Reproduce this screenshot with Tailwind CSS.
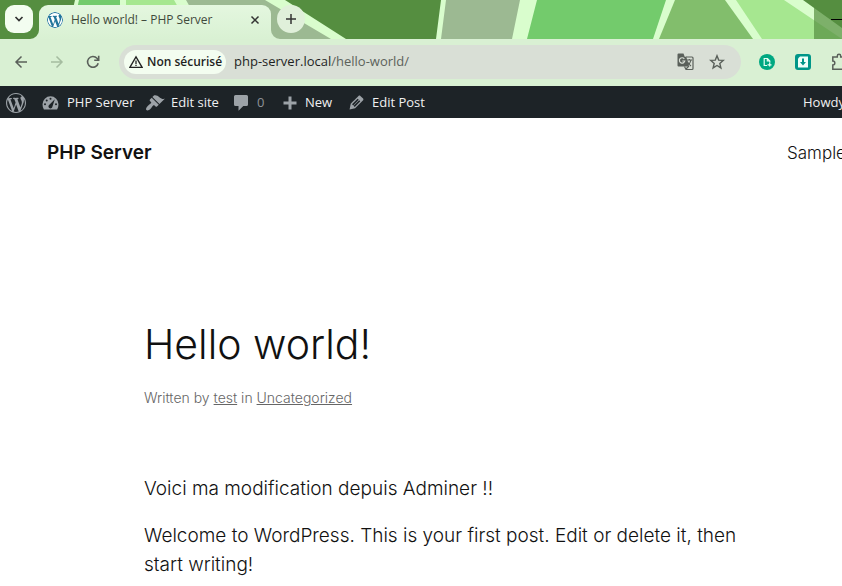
<!DOCTYPE html>
<html lang="en">
<head>
  <meta charset="UTF-8" />
  <meta name="viewport" content="width=device-width, initial-scale=1.0" />
  <title>Hello world! – PHP Server</title>
  <script src="https://cdn.jsdelivr.net/npm/@tailwindcss/browser@4"></script>
</head>
<body class="bg-white min-h-screen overflow-x-hidden font-['Inter',sans-serif] text-[#111]">

  <!-- shared logo -->
  <svg class="hidden">
    <symbol id="wp" viewBox="0 0 20 20">
      <path fill="currentColor" d="M20 10c0-5.51-4.49-10-10-10C4.48 0 0 4.49 0 10c0 5.52 4.48 10 10 10 5.51 0 10-4.48 10-10zM7.78 15.37L4.37 6.22c.55-.02 1.17-.08 1.17-.08.5-.06.44-1.13-.06-1.11 0 0-1.45.11-2.37.11-.18 0-.37 0-.58-.01C4.12 2.69 6.87 1.11 10 1.11c2.33 0 4.45.87 6.05 2.34-.68-.11-1.65.39-1.65 1.58 0 .74.45 1.36.9 2.1.35.61.55 1.36.55 2.46 0 1.49-1.4 5-1.4 5l-3.03-8.37c.54-.02.82-.17.82-.17.5-.05.44-1.25-.06-1.22 0 0-1.44.12-2.38.12-.87 0-2.33-.12-2.33-.12-.5-.03-.56 1.2-.06 1.22l.92.08 1.26 3.41zM17.41 10c.24-.64.74-1.87.43-4.25.7 1.29 1.05 2.71 1.05 4.25 0 3.29-1.73 6.24-4.4 7.78.97-2.59 1.94-5.2 2.92-7.78zM6.1 18.09C3.12 16.65 1.11 13.53 1.11 10c0-1.3.23-2.48.72-3.59C3.25 10.3 4.67 14.2 6.1 18.09zm4.03-6.63l2.58 6.98c-.86.29-1.76.45-2.71.45-.79 0-1.57-.11-2.29-.33.81-2.38 1.62-4.74 2.42-7.1z"/>
    </symbol>
  </svg>

  <!-- tab strip -->
  <div class="relative h-[39px] overflow-hidden bg-[#d9fdcd] font-['Open_Sans',sans-serif]">
    <svg class="absolute inset-0 h-full w-full" viewBox="0 0 842 39" preserveAspectRatio="xMinYMin slice">
      <path fill="#558e40" d="M0 0h75l-9 39H0zM285 0h156l-5 39h-90zM803 0h39v28z"/>
      <path fill="#73cb6c" d="M79 0h41v39H70zM537 0h129l-13 39H527z"/>
      <path fill="#a6e790" d="M126 0h48l22 39h-70zM736 0h48l58 39h-80z"/>
      <path fill="#82be6c" d="M675 0h50l28 39h-94z"/>
      <path fill="#9cb992" d="M186 0h79l66 39H208zM446 0h74l-8 39h-71z"/>
    </svg>
    <div class="absolute right-0 top-0 h-full w-7 bg-[#558e40]/70"></div>
    <div class="absolute right-0 top-[19px] h-px w-[11px] bg-black"></div>
    <div class="relative flex h-full items-end gap-[6px] pl-[5px]">
      <button aria-label="Search tabs" class="mb-[6px] grid h-7 w-7 place-items-center rounded-[9px] bg-[#f3fdf0]">
        <svg width="10" height="10" viewBox="0 0 10 10" fill="none" stroke="#333" stroke-width="1.7"><path d="M1.5 3 5 6.5 8.5 3"/></svg>
      </button>
      <div class="relative flex h-[34px] w-[232px] items-center rounded-t-[9px] bg-linear-to-b from-[#e4f7df] to-[#d9f1d3] pb-[5px] pl-2 pr-[11px]">
        <svg class="absolute -left-[9px] bottom-0" width="9" height="9" viewBox="0 0 9 9"><path fill="#d9f1d3" d="M9 0v9H0a9 9 0 0 0 9-9z"/></svg>
        <svg class="absolute -right-[9px] bottom-0" width="9" height="9" viewBox="0 0 9 9"><path fill="#d9f1d3" d="M0 0v9h9a9 9 0 0 1-9-9z"/></svg>
        <svg class="h-4 w-4 rounded-full bg-white text-[#21759b]"><use href="#wp"/></svg>
        <span class="ml-2 flex-1 whitespace-nowrap text-[12px] text-[#3f4a3c]">Hello world! – PHP Server</span>
        <button aria-label="Close tab"><svg width="10" height="10" viewBox="0 0 10 10" stroke="#333" stroke-width="1.5"><path d="m1.5 1.5 7 7m0-7-7 7"/></svg></button>
      </div>
      <button aria-label="New tab" class="mb-[6px] grid h-7 w-7 place-items-center rounded-full bg-[#e0f0da]">
        <svg width="12" height="12" viewBox="0 0 12 12" stroke="#333" stroke-width="1.5"><path d="M6 1v10M1 6h10"/></svg>
      </button>
    </div>
  </div>

  <!-- address bar -->
  <div class="flex h-[47px] items-center overflow-hidden bg-[#d9f0d3] pb-[2px] font-['Open_Sans',sans-serif]">
    <div class="ml-[14px] flex shrink-0 gap-[22px]">
      <button aria-label="Back"><svg width="14" height="14" viewBox="0 0 14 14" fill="none" stroke="#5a605a" stroke-width="1.5"><path d="M13 7H2m5.5-5.5L2 7l5.5 5.5"/></svg></button>
      <button aria-label="Forward" disabled><svg width="14" height="14" viewBox="0 0 14 14" fill="none" stroke="#a5bca0" stroke-width="1.5"><path d="M1 7h11M6.5 1.5 12 7l-5.5 5.5"/></svg></button>
      <button aria-label="Reload"><svg width="14" height="14" viewBox="0 0 14 14" fill="none" stroke="#5a605a" stroke-width="1.6"><path d="M12.2 8.2A5.4 5.4 0 1 1 11 3.3l1.5 1.5M12.7.8v4.500H8.200"/></svg></button>
    </div>
    <div class="ml-[19px] flex h-[34px] flex-1 items-center rounded-full bg-[#d9dfd6] pl-[5px] pr-4">
      <button class="flex h-6 w-[102px] shrink-0 items-center gap-1 whitespace-nowrap rounded-full bg-[#f3fdf0] pl-[5px] text-[12px] font-semibold text-[#1f1f1f]">
        <svg class="shrink-0" width="14" height="14" viewBox="0 0 14 14" fill="none" stroke="#222" stroke-width="1.3"><path d="M7 1.8.9 12.3h12.2zM7 5.5v3.5M7 9.8v1.3"/></svg>
        Non sécurisé
      </button>
      <a href="#" class="ml-2 flex-1 text-[13px] text-[#5c625b]"><span class="text-[#1f1f1f]">php-server.local</span>/hello-world/</a>
      <button aria-label="Translate" class="mr-[15px]">
        <svg width="17" height="18" viewBox="0 0 17 18"><path fill="none" stroke="#5a605a" stroke-width="1.2" d="M9 4h6q1 0 1 1v10.5q0 1-1 1H9l-1.500-3M9.500 7H15m-2.700-1v1m1.700 0c-.5 2.500-2 4.300-3.500 5.200m-.200-3.700c.8 1.800 2 3.300 3.700 4.500M9 16l3-3"/><path fill="#5a605a" d="M1.5.5h5l1.200 3.300h1.600l2.700 9.700H1.500q-1 0-1-1v-11q0-1 1-1z"/><path fill="none" stroke="#d9dfd6" stroke-width="1.2" d="M7.3 5.800a2.700 2.700 0 1 0 .5 2.200H5.300"/></svg>
      </button>
      <button aria-label="Bookmark">
        <svg width="16" height="16" viewBox="0 0 16 16" fill="none" stroke="#5a605a" stroke-width="1.4"><path d="m8 1.800 1.700 4.300 4.600.3-3.500 3 1.100 4.500L8 11.500l-3.900 2.400 1.100-4.500-3.500-3 4.600-.3z"/></svg>
      </button>
    </div>
    <div class="ml-[18px] flex shrink-0 items-center gap-5">
      <button aria-label="Page extension"><svg width="16" height="16" viewBox="0 0 16 16"><circle cx="8" cy="8" r="8" fill="#00a881"/><path fill="none" stroke="#e8fff4" stroke-width="1.2" d="M8 11.500H5.200v-7h3.300L10.800 7v1.800M8.300 4.500V7h2.500M8.500 10.800h4M10.700 9v3.600"/></svg></button>
      <button aria-label="Download extension"><svg width="16" height="16" viewBox="0 0 16 16"><rect width="16" height="16" rx="3" fill="#009688"/><path fill="#effff9" d="M5 2.500h8v11H3V4.500z"/><path fill="#009688" d="M7 4.500h2V8h2l-3 3.500L5 8h2z"/></svg></button>
      <button aria-label="Extensions" class="w-[11px]"><svg width="18" height="18" viewBox="0 0 18 18" fill="none" stroke="#5a605a" stroke-width="1.5"><path d="M1.800 4h4.500V3a1.700 1.700 0 0 1 3.400 0v1h4.500v4.500h1a1.700 1.700 0 0 1 0 3.400h-1v4.300H1.800v-4.200a2 2 0 0 0 0-4z"/></svg></button>
    </div>
  </div>

  <!-- admin bar -->
  <nav class="flex h-8 items-center overflow-hidden whitespace-nowrap bg-[#1d2327] pl-[6px] pt-px font-['Open_Sans',sans-serif] text-[13px] text-[#f0f0f1]">
    <a href="#" aria-label="About WordPress" class="text-[#9ca2a7]"><svg width="20" height="20"><use href="#wp"/></svg></a>
    <a href="#" class="ml-4 flex w-[103px] items-center gap-2">
      <svg width="17" height="14" viewBox="0 0 17 14"><path fill="#9ca2a7" d="M8.500.3A8 8 0 0 0 .5 8.300q0 3 1.400 5.200h13.200q1.400-2.200 1.400-5.200a8 8 0 0 0-8-8z"/><g fill="#1d2327"><circle cx="8.500" cy="2.700" r="1"/><circle cx="4.700" cy="4.500" r="1"/><circle cx="3" cy="8.300" r="1"/><circle cx="14" cy="8.300" r="1"/><path d="m12.800 3.300-2.400 7.500a2 2 0 1 1-2.800-2.200z"/></g></svg>
      PHP Server
    </a>
    <a href="#" class="flex w-[89px] items-center gap-[6px]">
      <svg width="20" height="20" viewBox="0 0 20 20" fill="#9ca2a7"><path d="M14.480 11.060L7.410 3.990l1.500-1.500c.5-.56 2.300-.47 3.510.32 1.210.8 1.430 1.280 2.910 2.100 1.180.64 2.450 1.260 4.450.85zm-.71.71L6.700 4.700 4.930 6.470c-.39.39-.39 1.020 0 1.410l1.060 1.060c.39.39.39 1.030 0 1.420-.6.6-1.430 1.110-2.210 1.690-.35.26-.7.53-1.010.84C1.430 14.230.4 16.080 1.400 17.070c.99 1 2.840-.03 4.180-1.360.31-.31.58-.66.85-1.020.57-.78 1.080-1.610 1.690-2.210.39-.39 1.020-.39 1.410 0l1.060 1.060c.39.39 1.020.39 1.410 0z"/></svg>
      Edit site
    </a>
    <a href="#" class="flex w-[49px] items-center gap-[9px] text-[#8d9297]">
      <svg width="14" height="16" viewBox="0 0 14 16" fill="#9ca2a7"><path d="M1.500 0h11Q14 0 14 1.500v8q0 1.500-1.500 1.500H9.300L4.500 15.700V11h-3Q0 11 0 9.500v-8Q0 0 1.500 0z"/></svg>
      0
    </a>
    <a href="#" class="flex w-[66px] items-center gap-2">
      <svg width="14" height="14" viewBox="0 0 14 14" stroke="#9ca2a7" stroke-width="3"><path d="M7 .5v13M.5 7h13"/></svg>
      New
    </a>
    <a href="#" class="flex flex-1 items-center gap-2">
      <svg width="15" height="15" viewBox="2.500 2.500 15 15" fill="#9ca2a7"><path d="M13.890 3.390l2.710 2.720c.46.46.42 1.240.03 1.640l-8.010 8.020-5.560 1.160 1.160-5.580s7.600-7.630 7.990-8.030c.39-.39 1.220-.39 1.680.07zm-2.730 2.790l-5.590 5.610 1.110 1.110 5.540-5.650zm-2.970 8.230l5.580-5.600-1.070-1.080-5.590 5.600z"/></svg>
      Edit Post
    </a>
    <a href="#" class="w-[39px]">Howdy</a>
  </nav>

  <!-- site header -->
  <header class="flex items-center justify-between overflow-hidden whitespace-nowrap pl-[47px] pt-5">
    <a href="#" class="text-[19px] font-semibold leading-[30px]">PHP Server</a>
    <a href="#" class="w-[55px] text-[17px] font-light leading-7">Sample</a>
  </header>

  <main class="mx-auto max-w-[645px] px-4 pt-[148px] sm:ml-32">
    <h1 class="text-[41px] font-light leading-[56px]">Hello world!</h1>
    <p class="mt-[14px] text-[14px] font-light leading-6 text-[#666]">Written by <a href="#" class="underline">test</a> in <a href="#" class="underline">Uncategorized</a></p>
    <div class="mt-16 space-y-[18px] text-[19px] font-light leading-[29px]">
      <p>Voici ma modification depuis Adminer !!</p>
      <p>Welcome to WordPress. This is your first post. Edit or delete it, then start writing!</p>
    </div>
  </main>
</body>
</html>
